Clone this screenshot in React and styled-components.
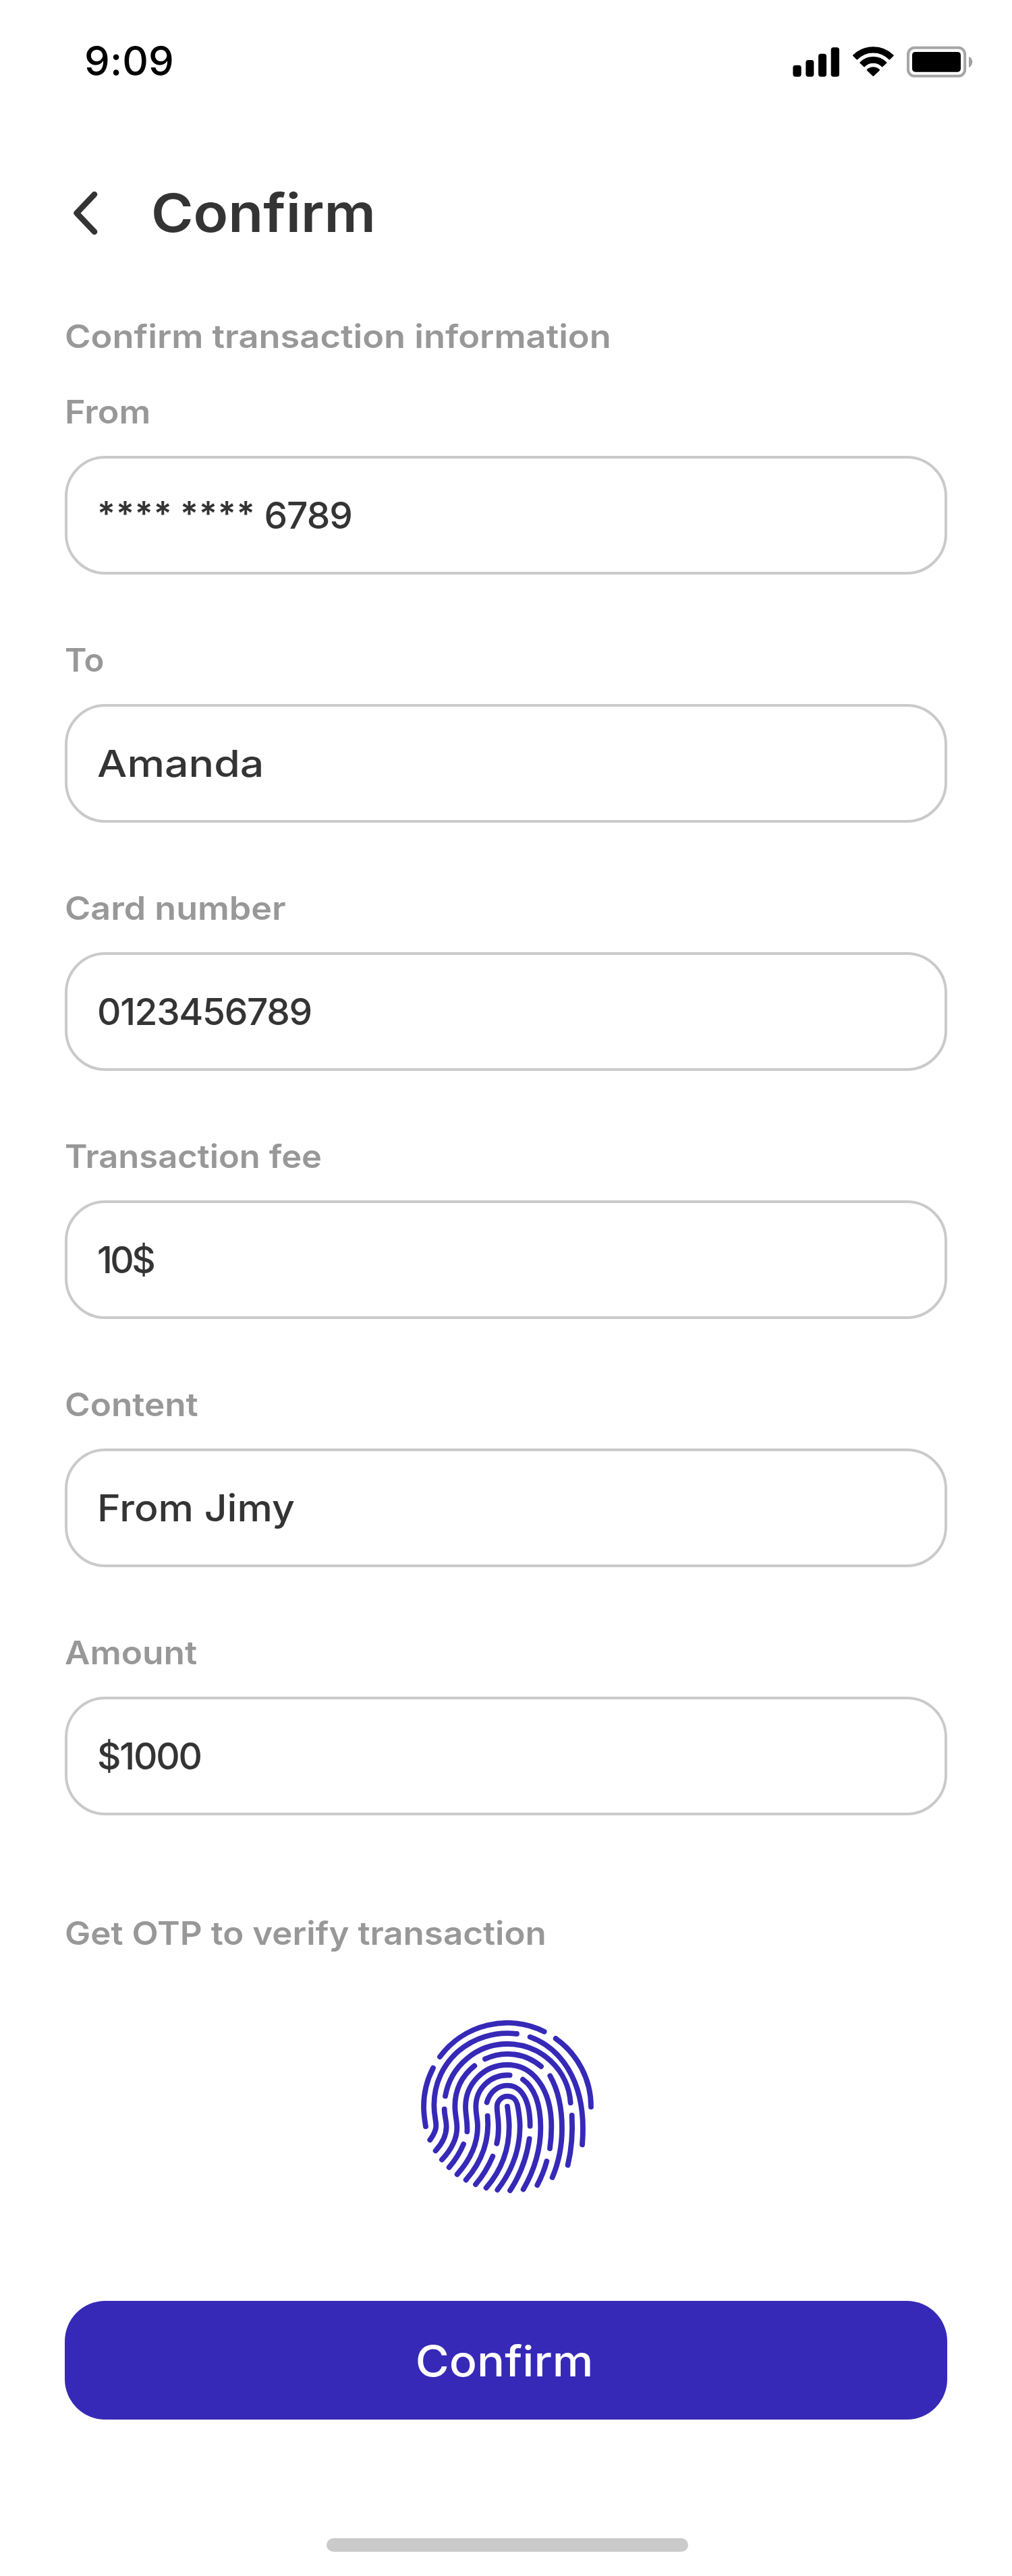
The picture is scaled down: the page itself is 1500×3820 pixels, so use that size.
import React from 'react';
import styled, { createGlobalStyle } from 'styled-components';

const color = {
  ink: '#343434',
  muted: '#989898',
  line: '#cacaca',
  primary: '#3629b7',
};

const GlobalStyle = createGlobalStyle`
  *, *::before, *::after { box-sizing: border-box; }
  body { margin: 0; background: #fff; }
`;

const Screen = styled.div`
  display: flex;
  flex-direction: column;
  width: 1500px;
  height: 3820px;
  background: #fff;
  color: ${color.ink};
  font-family: Inter, "Liberation Sans", sans-serif;
  font-kerning: normal;
  overflow: hidden;
`;

const StatusBar = styled.header`
  display: flex;
  justify-content: space-between;
  align-items: flex-start;
  height: 176px;
  padding: 50px 58px 0 125px;
`;

const Time = styled.span`
  font-size: 60px;
  font-weight: 550;
  line-height: 80px;
  letter-spacing: 0.1px;
  color: #000;
`;

const StatusIcons = styled.div`
  display: flex;
  align-items: center;
  gap: 18px;
  padding-top: 18px;

  svg { display: block; height: 47px; }
`;

const Content = styled.main`
  display: flex;
  flex-direction: column;
  padding: 83px 96px 0;
`;

const TitleBar = styled.div`
  display: flex;
  align-items: center;
  height: 112px;
  padding-left: 12px;
`;

const BackButton = styled.button`
  display: flex;
  width: 40px;
  height: 64px;
  margin: 2px 76px 0 0;
  padding: 0;
  border: 0;
  background: none;
`;

const Title = styled.h1`
  margin: 0;
  font-size: 79px;
  font-weight: 600;
  line-height: 112px;
  transform: scaleX(1.075);
  transform-origin: left;
`;

const Caption = styled.p`
  align-self: flex-start;
  margin: ${(p) => p.$top}px 0 0;
  font-size: 48px;
  font-weight: 600;
  line-height: 64px;
  color: ${color.muted};
  white-space: nowrap;
  transform: scaleX(${(p) => p.$stretch});
  transform-origin: left;
`;

const Form = styled.div`
  display: flex;
  flex-direction: column;
  gap: 95px;
  margin-top: 48px;
`;

const Field = styled.div`
  display: flex;
  flex-direction: column;
  gap: 33px;
`;

const FieldBox = styled.div`
  display: flex;
  align-items: center;
  height: 176px;
  padding: 0 44px;
  border: 4px solid ${color.line};
  border-radius: 60px;
`;

const Value = styled.span`
  font-size: 55px;
  font-weight: 500;
  line-height: 80px;
  letter-spacing: ${(p) => p.$tracking || 0}px;
  white-space: pre;
  transform: scaleX(${(p) => p.$stretch || 1});
  transform-origin: left;
`;

const Mask = styled.span`
  margin-right: 1.5px;
  font-size: 50px;
  font-weight: 600;
  line-height: 1;
  letter-spacing: 0.9px;
  word-spacing: -2px;
  vertical-align: 5px;
`;

const FingerprintButton = styled.button`
  align-self: center;
  display: flex;
  width: 260px;
  height: 260px;
  margin-top: 95px;
  padding: 0;
  border: 0;
  background: none;
`;

const ConfirmButton = styled.button`
  display: flex;
  align-items: center;
  justify-content: center;
  height: 176px;
  margin-top: 158px;
  padding: 2px 5px 0 0;
  border: 0;
  border-radius: 60px;
  background: ${color.primary};
  color: #fff;
  font-family: inherit;
  font-size: 63px;
  font-weight: 500;
`;

const ButtonLabel = styled.span`
  transform: scaleX(1.084);
`;

const HomeIndicator = styled.div`
  align-self: center;
  width: 536px;
  height: 20px;
  margin: 176px 0 0 4px;
  border-radius: 10px;
  background: ${color.line};
`;

const Signal = () => (
  <svg width="70" viewBox="72 84 210 141">
    <rect x="73" y="170.5" width="37" height="50.5" rx="11" />
    <rect x="130" y="147" width="36" height="74" rx="11" />
    <rect x="186" y="119.5" width="36" height="101.5" rx="11" />
    <rect x="242" y="91" width="37" height="130" rx="11" />
  </svg>
);

const Wifi = () => (
  <svg width="63" viewBox="336 84 189 141" stroke="#000" strokeWidth="6" strokeLinejoin="round">
    <path d="M342 127 A125 125 0 0 1 518 127 L502 143 A100 100 0 0 0 358 143 Z" />
    <path d="M373 159 A80 80 0 0 1 487 159 L470 175 A56 56 0 0 0 390 175 Z" />
    <path d="M404 191 A38 38 0 0 1 456 191 L430 216 Z" />
  </svg>
);

const Battery = () => (
  <svg width="98" viewBox="582 84 294 141">
    <rect x="588" y="92.5" width="252.5" height="126" rx="29" fill="none" stroke="#a6a6a6" strokeWidth="12" />
    <rect x="606" y="111" width="216" height="89" rx="14" />
    <path d="M858 132 C868 136 874 145 874 156 C874 167 868 176 858 180 Z" fill="#a0a0a0" />
  </svg>
);

const Chevron = () => (
  <svg width="40" height="64" viewBox="0 0 40 64" fill="none" stroke={color.ink} strokeWidth="8.6" strokeLinecap="round" strokeLinejoin="round">
    <path d="M32 4.3 L5.6 32 L32 59.7" />
  </svg>
);

const ridges = [
  'M156 240 A372 372 0 0 1 620 128',
  'M671 159 A372 372 0 0 1 828 463',
  'M126 290 A372 372 0 0 0 84 462 C84 495 88 520 93 550',
  'M498 138 C298 115 130 260 130 455 C130 500 139 522 139 547 C139 567 127 590 112 610',
  'M557 152 C700 205 792 350 792 560 C792 585 791 605 789 631',
  'M180 415 A280 280 0 0 1 456 183 A281 281 0 0 1 737 445',
  'M176 473 C176 505 185 520 185 550 C185 590 165 628 137 658',
  'M743 501 C747 570 742 650 725 722',
  'M357 250 A230 230 0 0 1 606 283',
  'M310 280 C254 325 223 385 223 460 C223 500 232 520 232 555 C232 605 205 655 165 698',
  'M646 325 C680 385 699 460 699 560 C699 640 682 715 656 777',
  'M277 573 C280 530 270 500 270 462 A186 186 0 0 1 456 276 C570 276 652 385 652 550 C652 590 649 620 645 648',
  'M261 629 C245 667 224 700 197 732',
  'M467 322 C383 317 316 380 316 462 C316 500 324 515 324 550 C324 630 285 705 233 763',
  'M525 341 C575 375 604 450 604 555 C604 660 573 750 527 830',
  'M365 443 C378 398 412 368 456 368 C515 368 557 425 557 548',
  'M368 503 C378 615 338 712 272 788',
  'M554 605 C542 690 514 765 468 835',
  'M409 626 C418 590 418 555 415 520 C412 490 410 480 410 462 A46 46 0 0 1 456 416 C490 416 500 440 504 470 C509 500 512 525 512 550 C512 655 475 750 412 832',
  'M391 683 C371 730 347 770 315 808',
  'M456 461 C460 490 464 520 464 550 C464 655 430 745 362 823',
  'M631 705 C621 742 607 777 589 811',
];

const Fingerprint = () => (
  <svg width="260" height="260" viewBox="60 72 780 780" fill="none" stroke={color.primary} strokeWidth="23.5" strokeLinecap="round" strokeLinejoin="round">
    {ridges.map((d) => <path key={d} d={d} />)}
  </svg>
);

const fields = [
  { label: 'From', labelStretch: 1.083, mask: '**** **** ', value: '6789', tracking: -1.05 },
  { label: 'To', labelStretch: 1.024, value: 'Amanda', stretch: 1.138 },
  { label: 'Card number', labelStretch: 1.084, value: '0123456789', tracking: -1.36 },
  { label: 'Transaction fee', labelStretch: 1.056, value: '10$', tracking: -3.6 },
  { label: 'Content', labelStretch: 1.068, value: 'From Jimy', stretch: 1.0726 },
  { label: 'Amount', labelStretch: 1.0715, value: '$1000', tracking: -2.2 },
];

export default function App() {
  return (
    <Screen>
      <GlobalStyle />
      <StatusBar>
        <Time>9:09</Time>
        <StatusIcons>
          <Signal />
          <Wifi />
          <Battery />
        </StatusIcons>
      </StatusBar>
      <Content>
        <TitleBar>
          <BackButton aria-label="Back"><Chevron /></BackButton>
          <Title>Confirm</Title>
        </TitleBar>
        <Caption $top={96} $stretch={1.0915}>Confirm transaction information</Caption>
        <Form>
          {fields.map((f) => (
            <Field key={f.label}>
              <Caption as="label" $top={0} $stretch={f.labelStretch}>{f.label}</Caption>
              <FieldBox>
                <Value $tracking={f.tracking} $stretch={f.stretch}>
                  {f.mask && <Mask>{f.mask}</Mask>}
                  {f.value}
                </Value>
              </FieldBox>
            </Field>
          ))}
        </Form>
        <Caption $top={143} $stretch={1.0646}>Get OTP to verify transaction</Caption>
        <FingerprintButton aria-label="Verify with fingerprint"><Fingerprint /></FingerprintButton>
        <ConfirmButton><ButtonLabel>Confirm</ButtonLabel></ConfirmButton>
        <HomeIndicator />
      </Content>
    </Screen>
  );
}
